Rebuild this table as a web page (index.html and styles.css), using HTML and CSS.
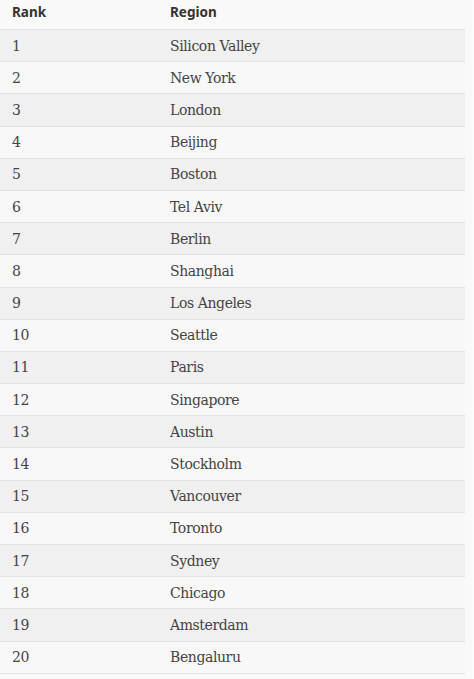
FILE: index.html
```html
<!DOCTYPE html>
<html>
<head>
<meta charset="utf-8">
<link rel="stylesheet" href="styles.css">
</head>
<body>
<div class="frame">
  <table class="ranking">
    <thead>
      <tr><th class="c-rank">Rank</th><th>Region</th></tr>
    </thead>
    <tbody>
      <tr><td class="c-rank">1</td><td>Silicon Valley</td></tr>
      <tr><td class="c-rank">2</td><td>New York</td></tr>
      <tr><td class="c-rank">3</td><td>London</td></tr>
      <tr><td class="c-rank">4</td><td>Beijing</td></tr>
      <tr><td class="c-rank">5</td><td>Boston</td></tr>
      <tr><td class="c-rank">6</td><td>Tel Aviv</td></tr>
      <tr><td class="c-rank">7</td><td>Berlin</td></tr>
      <tr><td class="c-rank">8</td><td>Shanghai</td></tr>
      <tr><td class="c-rank">9</td><td>Los Angeles</td></tr>
      <tr><td class="c-rank">10</td><td>Seattle</td></tr>
      <tr><td class="c-rank">11</td><td>Paris</td></tr>
      <tr><td class="c-rank">12</td><td>Singapore</td></tr>
      <tr><td class="c-rank">13</td><td>Austin</td></tr>
      <tr><td class="c-rank">14</td><td>Stockholm</td></tr>
      <tr><td class="c-rank">15</td><td>Vancouver</td></tr>
      <tr><td class="c-rank">16</td><td>Toronto</td></tr>
      <tr><td class="c-rank">17</td><td>Sydney</td></tr>
      <tr><td class="c-rank">18</td><td>Chicago</td></tr>
      <tr><td class="c-rank">19</td><td>Amsterdam</td></tr>
      <tr><td class="c-rank">20</td><td>Bengaluru</td></tr>
    </tbody>
  </table>
</div>
</body>
</html>
```
FILE: styles.css
```css
html, body {
  margin: 0;
  padding: 0;
  background: #ffffff;
}
.frame {
  width: 473px;
  height: 679px;
  background: #f9f9f9;
  box-sizing: border-box;
}
.ranking {
  width: 465px;
  border-collapse: collapse;
  color: #444444;
}
.ranking th {
  font-family: "Noto Sans", "Open Sans", sans-serif;
  font-weight: 700;
  font-size: 13.5px;
  line-height: 25px;
  text-align: left;
  height: 29px;
  padding: 0;
  vertical-align: top;
  color: #333333;
}
.ranking td {
  font-family: "DejaVu Serif", "Liberation Serif", serif;
  font-size: 14px;
  letter-spacing: -0.4px;
  height: 31.2px;
  padding: 0;
  vertical-align: middle;
  border-top: 1px solid #e3e3e3;
}
.ranking tbody tr:nth-child(odd) {
  background: #f0f0f0;
}
.ranking tbody tr:nth-child(even) {
  background: #f8f8f8;
}
.ranking tbody tr:last-child td {
  border-bottom: 1px solid #e3e3e3;
}
.c-rank {
  width: 158px;
  padding-left: 12px !important;
}
```
